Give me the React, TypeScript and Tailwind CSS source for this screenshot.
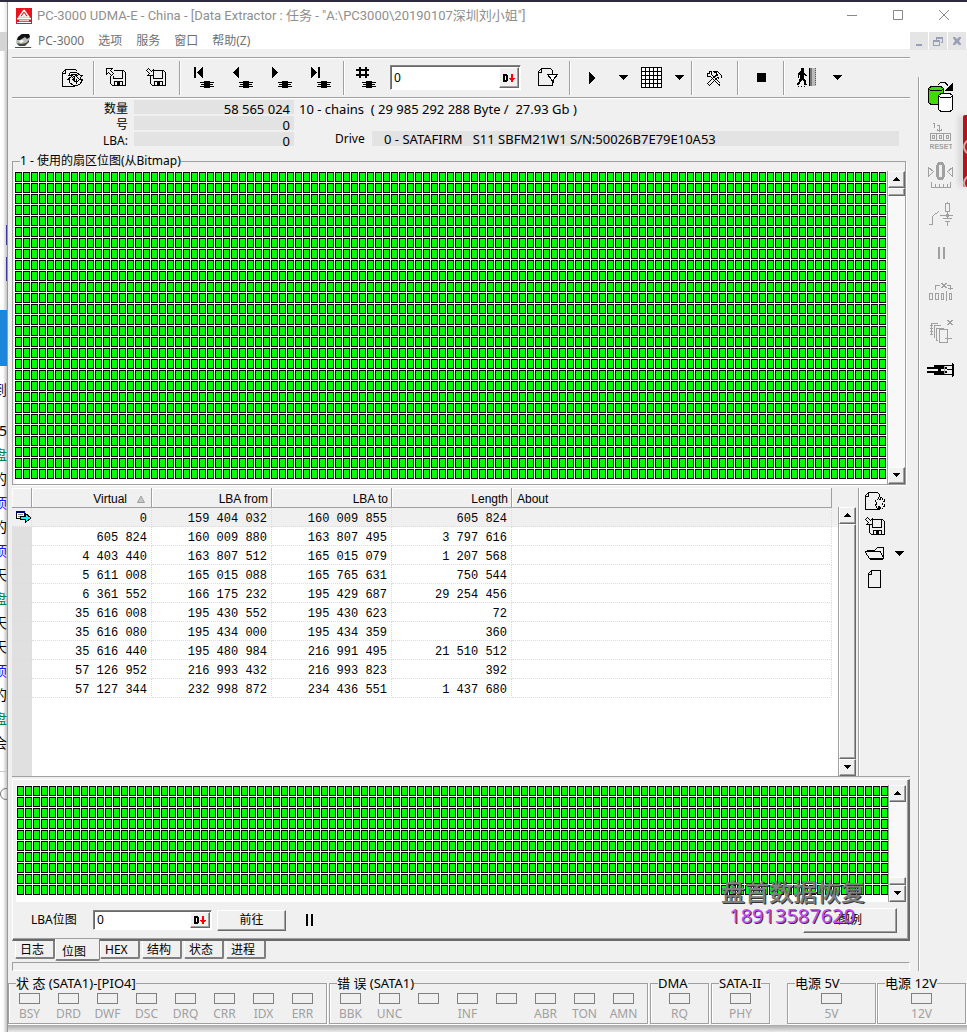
import type { ReactNode } from "react";
import { clsx } from "clsx";

const chains = [
  ["0", "159 404 032", "160 009 855", "605 824"],
  ["605 824", "160 009 880", "163 807 495", "3 797 616"],
  ["4 403 440", "163 807 512", "165 015 079", "1 207 568"],
  ["5 611 008", "165 015 088", "165 765 631", "750 544"],
  ["6 361 552", "166 175 232", "195 429 687", "29 254 456"],
  ["35 616 008", "195 430 552", "195 430 623", "72"],
  ["35 616 080", "195 434 000", "195 434 359", "360"],
  ["35 616 440", "195 480 984", "216 991 495", "21 510 512"],
  ["57 126 952", "216 993 432", "216 993 823", "392"],
  ["57 127 344", "232 998 872", "234 436 551", "1 437 680"],
];

const raised =
  "border border-t-white border-l-white border-r-[#696969] border-b-[#696969] bg-[#f0f0f0] shadow-[inset_-1px_-1px_0_#a0a0a0]";
const sunken =
  "border border-t-[#808080] border-l-[#808080] border-r-white border-b-white bg-white shadow-[inset_1px_1px_0_#696969]";

type IconProps = { w: number; h: number; color?: string; children: ReactNode };

const Icon = ({ w, h, color = "#000", children }: IconProps) => (
  <svg
    width={w}
    height={h}
    viewBox={`0 0 ${w} ${h}`}
    fill="none"
    stroke={color}
    shapeRendering="crispEdges"
    aria-hidden="true"
    className="shrink-0"
  >
    {children}
  </svg>
);

const Chip = () => (
  <path
    d="M10 14h6v7h-6zM6 15h14v1H6zM7 17h12v1H7zM6 19h14v1H6z"
    fill="#000"
    stroke="none"
  />
);

const NavIcon = ({ d }: { d: string }) => (
  <Icon w={20} h={22}>
    <path d={d} fill="#000" stroke="none" />
    <Chip />
  </Icon>
);

const FloppyIcon = ({ load }: { load?: boolean }) => (
  <Icon w={20} h={20}>
    <path d="M8 2.5H17.5L19.5 4.5V17.5H6.5L4.5 15.5V8" />
    <path d="M16.5 3V10.5H7.5V8" />
    <path d="M8.5 17V13.5H16.5V17M11.5 14V17" />
    <path d="M12 14h2v3h-2z" fill="#000" stroke="none" />
    {load ? (
      <path d="M2.5 .5L5.5 3.5L7.5 1.5V7.5H1.5L3.5 5.5L.5 2.5Z" fill="#f0f0f0" />
    ) : (
      <path d="M.5 .5H6.5L4.5 2.5L7.5 5.5L5.5 7.5L2.5 4.5L.5 6.5Z" fill="#f0f0f0" />
    )}
  </Icon>
);

const Caret = () => (
  <Icon w={10} h={5}>
    <path d="M0 0H10L5 5Z" fill="#000" stroke="none" />
  </Icon>
);

const PauseIcon = ({ color = "#000" }: { color?: string }) => (
  <Icon w={7} h={12}>
    <path d="M0 0h2v12H0zM5 0h2v12H5z" fill={color} stroke="none" />
  </Icon>
);

const ToolButton = ({
  label,
  width = "w-10",
  children,
}: {
  label: string;
  width?: string;
  children: ReactNode;
}) => (
  <button
    aria-label={label}
    className={clsx("flex h-full shrink-0 items-center justify-center", width)}
  >
    {children}
  </button>
);

const Separator = ({ tight }: { tight?: boolean }) => (
  <div
    className={clsx(
      "h-[34px] w-[2px] shrink-0 border-l border-[#a0a0a0] bg-white",
      tight ? "mx-px" : "mx-[3px]"
    )}
  />
);

const LbaInput = ({ label, className }: { label: string; className: string }) => (
  <div className={clsx("flex shrink-0 p-px", sunken, className)}>
    <input
      aria-label={label}
      defaultValue="0"
      className="min-w-0 flex-1 bg-transparent pl-[2px] text-[12px] outline-none"
    />
    <button
      aria-label={`${label} format`}
      className={clsx("flex w-[20px] items-center justify-center", raised)}
    >
      <Icon w={12} h={8}>
        <path
          d="M0 0h4v1h1v6H4v1H0zM2 2v4h1V2z"
          fill="#000"
          fillRule="evenodd"
          stroke="none"
        />
        <path d="M8 0h2v4h2v1h-1v1h-1v2H8V6H7V5H6V4h2z" fill="#f00" stroke="none" />
      </Icon>
    </button>
  </div>
);

const ScrollArrow = ({ up }: { up?: boolean }) => (
  <button
    aria-label={up ? "Scroll up" : "Scroll down"}
    className={clsx("flex h-[17px] w-full shrink-0 items-center justify-center pb-[2px]", raised)}
  >
    <Icon w={7} h={4}>
      <path d={up ? "M3 0h1v1h1v1h1v1h1v1H0V3h1V2h1V1h1z" : "M0 0h7v1H6v1H5v1H4v1H3V3H2V2H1V1H0z"} fill="#000" stroke="none" />
    </Icon>
  </button>
);

const Scrollbar = ({ thumb }: { thumb: "top" | "bottom" | "full" }) => (
  <div className="flex w-[17px] shrink-0 flex-col bg-[#f8f8f8]">
    <ScrollArrow up />
    {thumb === "bottom" && <div className="flex-1" />}
    <div className={clsx("w-full", raised, thumb === "full" ? "flex-1" : "h-2")} />
    {thumb === "top" && <div className="flex-1" />}
    <ScrollArrow />
  </div>
);

const SectorMap = ({ rows, height }: { rows: number; height: string }) => (
  <div
    className={clsx(
      "grid grid-cols-[repeat(auto-fill,7px)] auto-rows-[10px] gap-px overflow-hidden",
      height
    )}
  >
    {Array.from({ length: rows * 109 }, (_, i) => (
      <i key={i} className="border border-black bg-[#00ff00]" />
    ))}
  </div>
);

const TitleBar = () => (
  <header className="bg-white text-[#8f8f8f]">
    <div className="flex h-[28px] items-center pl-2">
      <svg width="16" height="16" viewBox="0 0 16 16" aria-hidden="true">
        <path d="M0 0h16v16H0z" fill="#e5151b" />
        <path d="M8 2L3 9h10L8 2M6 9l2-3 2 3" fill="none" stroke="#fff" strokeWidth="1.3" />
        <path d="M1 10h14v1.4H1zM3 12.2h10v1H3zM1 14h14v1H1z" fill="#fff" />
      </svg>
      <h1 className="ml-[5px] flex-1 pb-px font-['Roboto','Noto_Sans_CJK_SC',sans-serif] text-[13px] whitespace-pre">
        {'PC-3000 UDMA-E - China - [Data Extractor : 任务 - "A:\\PC3000\\20190107深圳刘小姐"]'}
      </h1>
      <div className="flex">
        {[
          ["Minimize", "M0 5.5H10"],
          ["Maximize", "M.5 .5H9.5V9.5H.5Z"],
          ["Close", "M0 0L10 10M10 0L0 10"],
        ].map(([name, d]) => (
          <button key={name} aria-label={name} className="flex h-7 w-[46px] items-center justify-center pb-[2px]">
            <svg width="10" height="10" viewBox="0 0 10 10" fill="none" stroke="#888">
              <path d={d} />
            </svg>
          </button>
        ))}
      </div>
    </div>
    <div className="flex h-[19px] pl-[7px]">
      <svg width="16" height="15" viewBox="0 0 16 15" className="mt-[4px]" aria-hidden="true">
        <path d="M2 4l4-4 9 1v4l-4 5-9 1-1-3z" fill="#bbb" />
        <path d="M3 3l4-3h7l1 3-3 2-2-2-5 3H2z" fill="#111" />
        <path d="M2 9l4 1 5-1 3-3v2l-4 4H4z" fill="#444" />
        <path d="M4 7l3-1 2 1-3 2z" fill="#fff" />
        <path d="M0 13h16v1H0z" fill="#f00" />
      </svg>
      <nav className="ml-[7px] flex flex-1 items-center gap-[14px] pt-[2px] text-[12px] text-[#707070]">
        {["PC-3000", "选项", "服务", "窗口", "帮助(Z)"].map((item) => (
          <button key={item}>{item}</button>
        ))}
      </nav>
      <div className="mt-[2px] mr-px flex gap-px">
        {[
          ["Minimize child", "M2 8h6v2H2z"],
          ["Restore child", "M3 1h7v6H8V6h1V3H4v1H3zM0 4h7v6H0zM1 6v3h5V6z"],
          ["Close child", "M1 1h2l2 2 2-2h2v1L7 5l2 3v1H7L5 7 3 9H1V8l2-3-2-3z"],
        ].map(([name, d]) => (
          <button key={name} aria-label={name} className="flex h-[18px] w-[18px] items-center justify-center bg-[#e5e5e5]">
            <svg width="10" height="10" viewBox="0 0 10 10">
              <path d={d} fill="#9a9fb8" fillRule="evenodd" />
            </svg>
          </button>
        ))}
      </div>
    </div>
  </header>
);

const Toolbar = () => (
  <div className="mt-2 flex h-[41px] items-center border-t border-b border-[#a0a0a0] pl-[40px] shadow-[inset_0_1px_0_#fff,0_1px_0_#fff]">
    <ToolButton label="Refresh map">
      <Icon w={21} h={20}>
        <path d="M13 18.5H.5V4.5L3.5 1.5H13.5L15.5 3.5M.5 5.5H3.5V2" />
        <path d="M6.5 7.5L8.5 4.5H14.5L18.5 7.5H20L17.5 11.5L13.5 7.5H15.5L13.5 6.5H11.5L9.5 7.5Z" fill="#f0f0f0" />
        <path d="M12.5 7.5V12.5M14.5 10.5V15.5M9.5 6.5L12.5 9.5M5.5 11.5L9.5 8.5L12.5 11.5H10.5L12.5 13.5H15.5L17.5 11.5H20.5L18.5 15.5L15.5 17.5H11.5L7.5 14.5V11.5Z" />
      </Icon>
    </ToolButton>
    <Separator tight />
    <ToolButton label="Load">
      <FloppyIcon />
    </ToolButton>
    <ToolButton label="Save">
      <FloppyIcon load />
    </ToolButton>
    <Separator />
    <ToolButton label="First" width="w-[39px]">
      <NavIcon d="M0 0h2v11H0zM9 0v11L3 5.5z" />
    </ToolButton>
    <ToolButton label="Previous" width="w-[39px]">
      <NavIcon d="M6 0v11L0 5.5z" />
    </ToolButton>
    <ToolButton label="Next" width="w-[39px]">
      <NavIcon d="M0 0v11l6-5.5z" />
    </ToolButton>
    <ToolButton label="Last" width="w-[39px]">
      <NavIcon d="M0 0v11l6-5.5zM7 0h2v11H7z" />
    </ToolButton>
    <Separator />
    <ToolButton label="Go to number" width="w-[35px]">
      <NavIcon d="M3 0h2v2h4V0h2v2h2v2h-2v3h2v2h-2v2H9V9H5v2H3V9H0V7h3V4H0V2h3zM5 4v3h4V4z" />
    </ToolButton>
    <LbaInput label="Sector" className="mx-[7px] h-[25px] w-[131px]" />
    <ToolButton label="Filter">
      <Icon w={21} h={19}>
        <path d="M14.5 13V17.5H.5V3.5L3.5 .5H12.5L14.5 2.5V6M.5 4.5H3.5V1" />
        <path d="M9.5 6.5H19.5L15.5 11.5V14L13.5 12V11.5Z" fill="#fff" />
      </Icon>
    </ToolButton>
    <Separator tight />
    <ToolButton label="Start" width="w-10">
      <Icon w={6} h={12}>
        <path d="M0 0L6 6L0 12Z" fill="#000" stroke="none" />
      </Icon>
    </ToolButton>
    <ToolButton label="Start options" width="w-[22px]">
      <Caret />
    </ToolButton>
    <ToolButton label="Map" width="w-[34px]">
      <Icon w={21} h={21}>
        <path d="M0 0h21v21H0z" fill="#fff" stroke="none" />
        <path d="M.5 .5H20.5V20.5H.5ZM4.5 0V21M8.5 0V21M12.5 0V21M16.5 0V21M0 4.5H21M0 8.5H21M0 12.5H21M0 16.5H21" />
      </Icon>
    </ToolButton>
    <ToolButton label="Map options" width="w-[22px]">
      <Caret />
    </ToolButton>
    <Separator tight />
    <ToolButton label="Tools">
      <Icon w={16} h={16}>
        <path d="M1.5 3V6.5H4.5L12.5 14.5L14.5 15.5M3 1.5H5.5V4.5L14.5 13.5M3.5 3.5V1.5M1.5 3.5H3" />
        <path d="M7 1.5H11.5L15.5 5.5V8M8 2.5H10.5V5L1.5 13.5L3.5 15.5L11.5 7.5L13.5 8.5M11.5 3.5V6" />
      </Icon>
    </ToolButton>
    <Separator />
    <ToolButton label="Stop" width="w-[38px]">
      <span className="h-[9px] w-[9px] bg-black" />
    </ToolButton>
    <Separator />
    <ToolButton label="Exit" width="w-[37px]">
      <Icon w={20} h={19}>
        <path
          d="M4 0h3v3H4zM3 3h4v2l2 2h1v1H8L7 7v3l2 3v3h1v1H7v-3l-2-2-2 3-1 2H0v-1l2-3 1-3V6L2 7v3H1V6z"
          fill="#000"
          stroke="none"
        />
        <path d="M1 18h1v1H1zM4 18h1v1H4zM7 18h1v1H7z" fill="#000" stroke="none" />
        <path d="M12 0h7v18h-7z" fill="#bbb" stroke="none" />
        <path d="M12 0h3v18h-3z" fill="#777" stroke="none" />
        <path d="M18.5 0V18" strokeDasharray="1 1" stroke="#555" />
        <path d="M12.5 0V18" />
      </Icon>
    </ToolButton>
    <ToolButton label="Exit options" width="w-6">
      <Caret />
    </ToolButton>
  </div>
);

const TaskInfo = () => (
  <div className="mt-[2px] flex text-[13px] leading-[14px]">
    <dl className="grid shrink-0 auto-rows-[14px] grid-cols-[116px_160px] gap-x-[6px] gap-y-[2px] text-right">
      <dt className="pt-[2px] text-[12px]">数量</dt>
      <dd className="bg-[#e3e3e3] pt-[2px] pr-1">58 565 024</dd>
      <dt className="pt-[2px] text-[12px]">号</dt>
      <dd className="bg-[#e3e3e3] pt-[2px] pr-1">0</dd>
      <dt className="pt-[2px] text-[12px]">LBA:</dt>
      <dd className="bg-[#e3e3e3] pt-[2px] pr-1">0</dd>
    </dl>
    <div className="ml-[5px] flex flex-1 flex-col justify-between pt-[2px] pr-[11px] whitespace-pre">
      <p>{"10 - chains  ( 29 985 292 288 Byte /  27.93 Gb )"}</p>
      <div className="flex items-center pl-9">
        <span className="w-[37px] text-[12px]">Drive</span>
        <span className="h-[15px] flex-1 bg-[#e3e3e3] pt-px pl-3">
          {"0 - SATAFIRM   S11 SBFM21W1 S/N:50026B7E79E10A53"}
        </span>
      </div>
    </div>
  </div>
);

const UsedSectors = () => (
  <fieldset className="mt-[7px] mr-1 flex min-w-0 flex-col border border-[#a0a0a0] shadow-[1px_1px_0_#fff]">
    <legend className="ml-[7px] text-[12px] leading-4">1 - 使用的扇区位图(从Bitmap)</legend>
    <div className="mt-[2px] flex pl-px">
      <div className="min-w-0 flex-1 border-r border-[#a0a0a0] bg-white pt-px pb-[5px] pl-px">
        <SectorMap rows={28} height="h-[307px]" />
      </div>
      <Scrollbar thumb="top" />
    </div>
  </fieldset>
);

const ChainTable = () => (
  <div className="mt-[3px] flex border-b border-[#a0a0a0]">
    <div className="flex-1 bg-white">
      <div className="bg-[linear-gradient(#f0f0f0_39px,#fff_39px)] pr-[6px]">
        <table className="w-full table-fixed border-separate border-spacing-0 text-right">
          <colgroup>
            <col className="w-5" />
            <col className="w-[120px]" />
            <col className="w-[120px]" />
            <col className="w-[120px]" />
            <col className="w-[120px]" />
            <col />
          </colgroup>
          <thead className="bg-[#f0f0f0] font-['Liberation_Sans',sans-serif] text-[12px] leading-4">
            <tr className="*:h-5 *:border-r *:border-b *:border-[#a0a0a0] *:p-0 *:pt-[2px] *:pr-[3px] *:font-normal *:shadow-[inset_1px_1px_0_#fff]">
              <th />
              <th>
                <span className="flex items-center justify-end gap-[10px] pr-[3px]">
                  Virtual
                  <svg width="8" height="8" viewBox="0 0 8 8" aria-hidden="true">
                    <path d="M4 1L7.5 7.5H.5Z" fill="#c8c8c8" stroke="#a0a0a0" />
                  </svg>
                </span>
              </th>
              <th>LBA from</th>
              <th>LBA to</th>
              <th>Length</th>
              <th className="pl-[5px]! text-left">About</th>
            </tr>
          </thead>
          <tbody className="font-['Liberation_Mono',monospace] text-[12px] leading-[14px]">
            {chains.map((row, i) => (
              <tr
                key={row[1]}
                className={clsx(
                  "*:h-[19px] *:border-r *:border-b *:border-dotted *:border-[#dcdcdc] *:p-0",
                  i === 0 && "bg-[#f0f0f0]"
                )}
              >
                <td className={i === 0 ? "" : "bg-[#e0e0e0]"}>
                  {i === 0 && (
                    <svg width="16" height="14" viewBox="0 0 16 14" shapeRendering="crispEdges" className="ml-1">
                      <path d="M.5 1.5H8.5V8.5H.5Z" fill="#fff" stroke="#000" />
                      <path d="M0 1h9v2H0z" fill="#000080" />
                      <path d="M2 4h5v1H2zM2 6h3v1H2z" fill="#888" />
                      <path d="M4.5 6.5H9.5V3.5L15 8L9.5 12.5V9.5H4.5Z" fill="#0ff" stroke="#000" />
                    </svg>
                  )}
                </td>
                {row.map((value, n) => (
                  <td key={n} className="pt-[3px]! pr-1!">
                    {value}
                  </td>
                ))}
                <td />
              </tr>
            ))}
            <tr>
              <td className="h-[78px] bg-[#e0e0e0] p-0" />
              <td colSpan={5} className="p-0" />
            </tr>
          </tbody>
        </table>
      </div>
    </div>
    <div className="flex bg-[#f0f0f0] pt-[19px]">
      <div className="flex border-l border-[#a0a0a0]">
        <Scrollbar thumb="full" />
      </div>
    </div>
    <div className="ml-[2px] flex w-[52px] flex-col border-l border-[#a0a0a0] pl-[6px] shadow-[inset_1px_0_0_#fff]">
      <button aria-label="Map settings" className="flex h-[26px] items-center">
        <Icon w={21} h={19}>
          <path d="M14.5 15V17.5H.5V3.5L3.5 .5H12.5L14.5 2.5V5M.5 4.5H3.5V1" />
          <path d="M12.5 5.5H13.5V7.5H15.5V5.5H17.5V7.5H19.5V9.5H17.5V12.5H19.5V14.5H17.5V16.5H15.5V14.5H13.5V16.5H11.5V14.5H10.5V12.5H11.5V9.5H10.5V7.5H12.5Z" strokeDasharray="2 1" />
        </Icon>
      </button>
      <button aria-label="Save map" className="flex h-[26px] items-center">
        <FloppyIcon load />
      </button>
      <div className="flex h-[26px] items-center gap-[9px]">
        <button aria-label="Open map">
          <Icon w={20} h={13}>
            <path d="M.5 4.5H15.5L18.5 11.5H4.5L.5 5.5ZM2.5 4V3.5H9.5L12.5 .5H18.5V11M4.5 12.5H18" />
          </Icon>
        </button>
        <button aria-label="Open options">
          <Caret />
        </button>
      </div>
      <button aria-label="New map" className="flex h-[26px] items-center pl-[3px]">
        <Icon w={13} h={18}>
          <path d="M.5 3.5L3.5 .5H12.5V17.5H.5ZM.5 4.5H3.5V1" />
        </Icon>
      </button>
    </div>
  </div>
);

const LbaMap = () => (
  <div className="mt-[2px] border-t border-l border-r-2 border-b-2 border-t-white border-l-white border-r-[#696969] border-b-[#696969] p-[3px] pr-[2px] pb-px shadow-[inset_-1px_-1px_0_#a0a0a0]">
    <div className="mt-[2px] flex">
      <div className="min-w-0 flex-1 border-r border-[#a0a0a0] bg-white pt-px pb-[7px] pl-px">
        <SectorMap rows={10} height="h-[109px]" />
      </div>
      <Scrollbar thumb="bottom" />
    </div>
    <div className="flex h-9 items-center pr-[9px] pl-[15px] text-[12px]">
      <span className="w-[62px]">LBA位图</span>
      <LbaInput label="LBA位图" className="h-5 w-[119px]" />
      <button className={clsx("ml-[5px] h-[21px] w-[69px]", raised)}>前往</button>
      <button aria-label="Pause" className="ml-5">
        <PauseIcon />
      </button>
      <button className={clsx("ml-auto h-[25px] w-[94px]", raised)}>图例</button>
    </div>
  </div>
);

const Tabs = () => (
  <div className="flex h-[21px] items-start gap-[2px] pl-[3px] text-[12px]">
    {["日志", "位图", "HEX", "结构", "状态", "进程"].map((tab) => {
      const active = tab === "位图";
      return (
        <button
          key={tab}
          className={clsx(
            "rounded-b-xs border-b-2 border-[#808080] text-left leading-4",
            active
              ? "-mx-[2px] -mt-[2px] h-[22px] w-[45px] border-r border-l border-l-white bg-[#f0f0f0] pt-[5px] pl-[6px]"
              : "h-[18px] w-10 border-r-2 border-l border-l-white pt-px pl-1"
          )}
        >
          {tab}
        </button>
      );
    })}
  </div>
);

const StatusGroup = ({
  title,
  flags,
  className,
}: {
  title: string;
  flags: string[];
  className: string;
}) => (
  <fieldset
    className={clsx("min-w-0 border border-[#a0a0a0] shadow-[1px_1px_0_#fff,inset_1px_0_0_#fff]", className)}
  >
    <legend className="ml-[7px] text-[13px] leading-[14px] whitespace-nowrap">{title}</legend>
    <div className={clsx("flex", flags.length > 1 ? "pl-px" : "justify-center")}>
      {flags.map((flag, i) => (
        <div key={i} className="flex w-[39px] shrink-0 flex-col items-center pt-[3px] text-[#a0a0a0]">
          <span className="h-[11px] w-[21px] border border-[#808080]" />
          <span className="mt-[2px] h-[17px] text-[12px] leading-4">{flag}</span>
        </div>
      ))}
    </div>
  </fieldset>
);

const StatusBar = () => (
  <footer className="flex pb-px">
    <StatusGroup title="状 态 (SATA1)-[PIO4]" flags={["BSY", "DRD", "DWF", "DSC", "DRQ", "CRR", "IDX", "ERR"]} className="w-[319px]" />
    <StatusGroup title="错 误 (SATA1)" flags={["BBK", "UNC", "", "INF", "", "ABR", "TON", "AMN"]} className="ml-[2px] w-[319px]" />
    <StatusGroup title="DMA" flags={["RQ"]} className="ml-[2px] w-[59px]" />
    <StatusGroup title="SATA-II" flags={["PHY"]} className="ml-[2px] w-[59px]" />
    <StatusGroup title="电源 5V" flags={["5V"]} className="ml-[17px] w-[89px]" />
    <StatusGroup title="电源 12V" flags={["12V"]} className="ml-px w-[89px]" />
  </footer>
);

const SideButton = ({ label, children }: { label: string; children: ReactNode }) => (
  <button aria-label={label} className="flex h-[39px] w-11 items-center justify-center">
    {children}
  </button>
);

const SideBar = () => (
  <aside className="mt-[28px] ml-2 flex w-[49px] flex-col border-l border-[#a0a0a0] shadow-[inset_1px_0_0_#fff]">
    <SideButton label="Copy drive">
      <Icon w={26} h={30}>
        <path d="M.5 6.5L3 4.5H13L15.5 6.5V20.5L13 22.5H3L.5 20.5Z" fill="#3fdc00" />
        <path d="M.5 7L3 8.5H13L15.5 7" />
        <path d="M10.5 13.5L13 11.5H22L24.5 13.5V27.5L22 29.5H13L10.5 27.5Z" fill="#fff" />
        <path d="M10.5 14L13 15.5H22L24.5 14M10 2.5L13 .5H17L20 3.5" />
        <path d="M25 0V9H17Z" fill="#000" stroke="none" />
      </Icon>
    </SideButton>
    <SideButton label="Reset">
      <svg width="22" height="28" viewBox="0 0 22 28" fill="none" stroke="#a0a0a0" shapeRendering="crispEdges">
        <path d="M3 1.5H4.5V6M7 3.5H9.5V9M7 7.5L9.5 9.5L12 7.5M.5 18.5V11.5H21M0 18.5H21M6.5 12V18M13.5 12V18M20.5 12V18" />
        <path d="M2.5 13.5H4.5V16.5H2.5ZM9.5 13.5H11.5V16.5H9.5ZM16.5 13.5H18.5V16.5H16.5Z" />
        <text x="11" y="27" textAnchor="middle" fontSize="7" fontWeight="bold" fill="#a0a0a0" stroke="none" fontFamily="Liberation Sans, sans-serif">
          RESET
        </text>
      </svg>
    </SideButton>
    <SideButton label="Recalibrate">
      <Icon w={26} h={26} color="#a0a0a0">
        <path d="M.5 5.5L5.5 9.5L.5 14.5ZM24.5 5.5L19.5 9.5L24.5 14.5ZM3.5 20V25.5H22.5V20M7.5 22V25M11.5 22V25M15.5 22V25M19.5 22V25" />
        <path
          d="M10 0h5v1h1v2h1v12h-1v2h-1v1h-5v-1H9v-2H8V3h1V1h1zM11 3v12h3V3z"
          fill="#a0a0a0"
          fillRule="evenodd"
          stroke="none"
        />
      </Icon>
    </SideButton>
    <SideButton label="Power">
      <Icon w={24} h={24} color="#a0a0a0">
        <path d="M0 22.5H3.5V13.5M4 13.5L10 9.5M11 13.5H24M16.5 1.5H20.5V9.5H16.5ZM18.5 0V1M18.5 10V16M14 16.5H23M16 19.5H21M18.5 19V24" />
        <path d="M17 12h3v3h-3z" fill="#a0a0a0" stroke="none" />
      </Icon>
    </SideButton>
    <SideButton label="Pause">
      <PauseIcon color="#a0a0a0" />
    </SideButton>
    <SideButton label="Cancel sector">
      <Icon w={24} h={19} color="#a0a0a0">
        <path d="M6.5 8V3.5H11M18 3.5H21.5V8M19 6.5H24M.5 11.5H3.5V17.5H.5ZM6.5 11.5H9.5V17.5H6.5ZM12.5 11.5H14.5V17.5H12.5ZM17.5 9V19M20.5 11.5H22.5V17.5H20.5Z" />
        <path
          d="M12 1h2v1h2V1h2v1h-1v1h-1v1h1v1h1v1h-2V5h-2v1h-2V5h1V4h1V3h-1V2h-1z"
          fill="#a0a0a0"
          stroke="none"
        />
      </Icon>
    </SideButton>
    <SideButton label="Delete copies">
      <Icon w={23} h={24} color="#a0a0a0">
        <path d="M2 4.5H8M1.5 4V16M0 6.5H3M0 9.5H3M0 12.5H3M0 15.5H3M4.5 19V6.5H11M8 21.5H6.5V9.5H14M9.5 10.5H17.5V23.5H9.5ZM15 19.5H22" />
        <path
          d="M17 1h2v1h2V1h2v1h-1v1h-1v1h1v1h1v1h-2V5h-2v1h-2V5h1V4h1V3h-1V2h-1z"
          fill="#a0a0a0"
          stroke="none"
        />
      </Icon>
    </SideButton>
    <SideButton label="Connect">
      <Icon w={28} h={14}>
        <path d="M0 4h20v2H0zM0 8h20v2H0zM7 2h10v2H7zM11 6h3v2h-3zM7 10h10v2H7z" fill="#000" stroke="none" />
        <path d="M17 2.5H26M17 11.5H26M25.5 0V14M26.5 1V13M20 6.5H25" />
        <path d="M17.5 3V11" stroke="#a0a0a0" />
      </Icon>
    </SideButton>
  </aside>
);

const chatLines = [
  ["到", "text-[#101040]"],
  ["25", "text-black"],
  ["盘", "text-[#0a7a4a]"],
  ["的", "text-black"],
  ["顷", "text-[#1414e0]"],
  ["的", "text-black"],
  ["顷", "text-[#1414e0]"],
  ["天", "text-black"],
  ["盘", "text-[#0a7a4a]"],
  ["天", "text-black"],
  ["天", "text-black"],
  ["顷", "text-[#1414e0]"],
  ["的", "text-black"],
  ["盘", "text-[#0a7a4a]"],
  ["会", "text-black"],
];

/* Sliver of the chat window that shows behind the left edge */
const BackgroundWindow = () => (
  <div className="flex w-2 shrink-0 flex-col overflow-hidden border-r border-[#9a9a9a] bg-linear-to-r from-white from-40% to-[#c4c4c4] text-[14px]">
    <div className="h-[30px] bg-white/60" />
    <div className="h-[19px] bg-[#d4d4d4]" />
    <div className="mt-[174px] ml-1.5 h-5 bg-[#3d3a9a]" />
    <div className="mt-3 ml-1.5 h-6 bg-[#3d3a9a]" />
    <div className="mt-[29px] h-14 bg-[#1c86dc]" />
    <div className="mt-[12px] flex flex-col items-end">
      {chatLines.map(([text, color], i) => (
        <span key={i} className={clsx("leading-6", i === 0 && "mb-[17px]", color)}>
          {text}
        </span>
      ))}
    </div>
    <div className="mt-[16px] h-px bg-[#c8c8c8]" />
    <div className="mt-4 h-3 w-3 shrink-0 rounded-full border border-[#777]" />
  </div>
);

export default function App() {
  return (
    <div className="relative flex min-h-screen flex-col overflow-hidden bg-[#f0f0f0] font-['Noto_Sans','Noto_Sans_CJK_SC',sans-serif] text-black">
      <div className="h-[2px] bg-[#2d2b3d]" />
      <div className="flex flex-1">
        <BackgroundWindow />
        <div className="flex min-w-0 flex-1 flex-col">
          <TitleBar />
          <div className="flex">
            <main className="min-w-0 flex-1 pl-1">
              <Toolbar />
              <TaskInfo />
              <UsedSectors />
              <ChainTable />
              <LbaMap />
              <Tabs />
              <div className="h-[9px] border border-t-[#a0a0a0] border-r-white border-b-white border-l-[#a0a0a0]" />
            </main>
            <SideBar />
          </div>
          <div className="h-[5px]" />
          <StatusBar />
          <div className="h-2 bg-linear-to-b from-[#a8a8a8] to-[#f4f4f4]" />
        </div>
      </div>

      <div className="absolute top-[115px] right-0 h-[72px] w-1 overflow-hidden rounded-l-xs bg-[#b5121b] shadow-[-3px_0_6px_rgba(0,0,0,0.2)]">
        <div className="mt-6 h-4 w-5 rounded-full border-2 border-[#e8a0a0]" />
        <div className="mt-5 h-4 w-5 rounded-full border-2 border-[#e8a0a0]" />
      </div>
      <div className="pointer-events-none absolute top-[880px] right-[102px] text-right font-medium">
        <p className="text-[24px] leading-6 text-[#808080] [text-shadow:1px_1px_0_#333]">盘首数据恢复</p>
        <p className="pr-[10px] font-['Open_Sans',sans-serif] text-[20px] leading-6 text-[#cc44ff] [text-shadow:1px_1px_0_#333]">
          18913587620
        </p>
      </div>
    </div>
  );
}
